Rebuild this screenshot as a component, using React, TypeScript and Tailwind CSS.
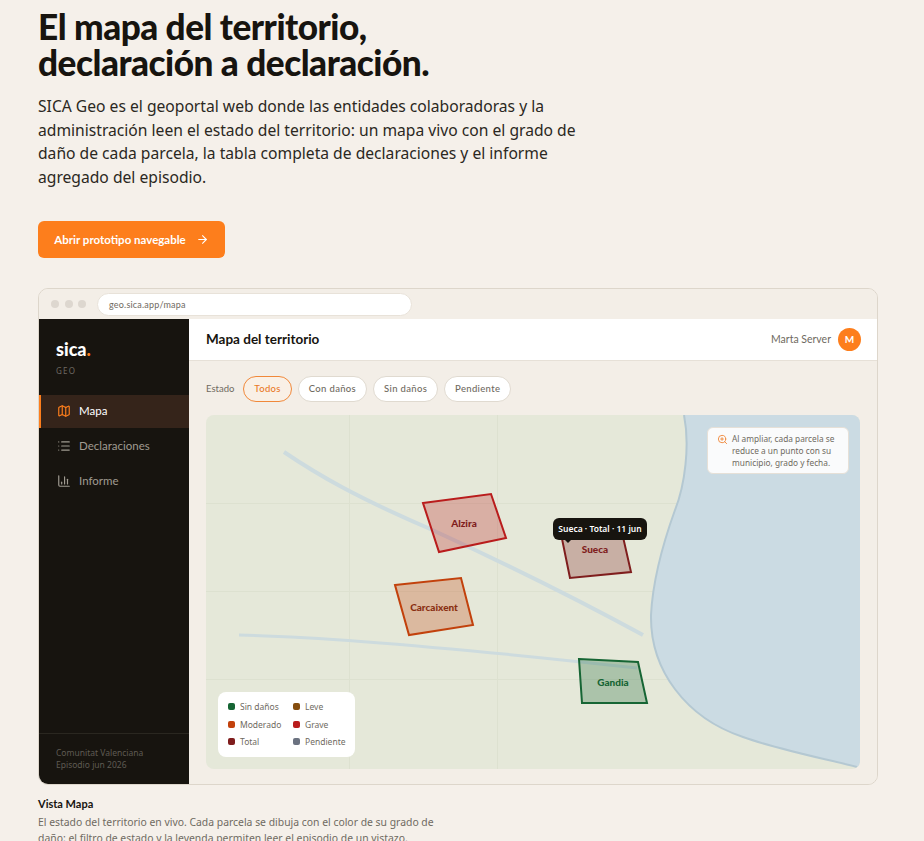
import { ArrowRight, ChartColumn, List, Map as MapIcon, ZoomIn } from "lucide-react";

const filters = ["Todos", "Con daños", "Sin daños", "Pendiente"];

const legend = [
	{ label: "Sin daños", color: "bg-[#166534]" },
	{ label: "Leve", color: "bg-[#854d0e]" },
	{ label: "Moderado", color: "bg-[#c2410c]" },
	{ label: "Grave", color: "bg-[#b91c1c]" },
	{ label: "Total", color: "bg-[#7f1d1d]" },
	{ label: "Pendiente", color: "bg-[#6b7280]" },
];

const navItems = [
	{ label: "Declaraciones", Icon: List },
	{ label: "Informe", Icon: ChartColumn },
];

function MapDrawing() {
	return (
		<svg viewBox="0 0 654 354" className="absolute inset-0 w-full h-full">
			<g stroke="#dde1d0" strokeWidth="1" fill="none">
				<path d="M143.5 0V354M291.5 0V354" />
				<path d="M0 88.5H654M0 176.5H654M0 264.5H654" />
			</g>
			<path
				d="M478 0C484 30 479 70 469 95C460 120 447 160 445 200C444 255 480 303 537 322C570 334 620 344 651 352L654 354V0Z"
				fill="#cbdbe3"
			/>
			<path
				d="M478 0C484 30 479 70 469 95C460 120 447 160 445 200C444 255 480 303 537 322C570 334 620 344 651 352"
				fill="none"
				stroke="#b4c8d2"
				strokeWidth="2"
			/>
			<path
				d="M78 37C112 60 150 82 222 113C270 135 360 178 437 220"
				fill="none"
				stroke="#cddbde"
				strokeWidth="4"
			/>
			<path
				d="M33 220C130 222 260 234 431 253"
				fill="none"
				stroke="#cddbde"
				strokeWidth="3"
			/>
			<polygon points="217,88 285,79 300,123 233,137" fill="#b91c1c" fillOpacity="0.28" stroke="#b91c1c" strokeWidth="2" />
			<polygon points="355,119 415,113 425,157 364,163" fill="#7f1d1d" fillOpacity="0.28" stroke="#7f1d1d" strokeWidth="2" />
			<polygon points="189,170 255,163 267,210 203,220" fill="#c2410c" fillOpacity="0.28" stroke="#c2410c" strokeWidth="2" />
			<polygon points="373,244 432,247 441,288 376,288" fill="#166534" fillOpacity="0.28" stroke="#166534" strokeWidth="2" />
			<g textAnchor="middle" className="font-['Lato',sans-serif] text-[10px] font-black">
				<text x="258" y="112" className="fill-[#7f1d1d]">Alzira</text>
				<text x="389" y="138" className="fill-[#7f1d1d]">Sueca</text>
				<text x="228" y="196" className="fill-[#8a2f12]">Carcaixent</text>
				<text x="407" y="271" className="fill-[#166534]">Gandia</text>
			</g>
		</svg>
	);
}

export default function App() {
	return (
		<div className="h-screen overflow-hidden bg-[#f5f0ea] pl-[38px] pr-[46px] pt-[8px] font-['Noto_Sans',sans-serif]">
			<h1 className="font-['Lato',sans-serif] text-[35.2px] leading-[36px] font-black tracking-[-0.5px] text-[#17140f]">
				El mapa del territorio,
				<br />
				declaración a declaración.
			</h1>
			<p className="mt-[15px] w-[545px] text-[15.65px] leading-[23.6px] text-[#2b2822]">
				SICA Geo es el geoportal web donde las entidades colaboradoras y la administración leen el estado del territorio: un mapa vivo con el grado de daño de cada parcela, la tabla completa de declaraciones y el informe agregado del episodio.
			</p>
			<button className="mt-[32px] flex h-[37px] w-[187px] items-center justify-center gap-[10px] rounded-[6px] bg-[#fd7e1c] font-['Lato',sans-serif] text-[11.5px] font-bold text-white">
				Abrir prototipo navegable
				<ArrowRight size={13} />
			</button>

			<div className="mt-[30px] flex h-[497px] flex-col overflow-hidden rounded-[10px] border border-[#ddd6cb]">
				<div className="flex h-[30px] shrink-0 items-center bg-[#f3eee7] pl-[12px]">
					<span className="h-[8px] w-[8px] rounded-full bg-[#ddd7cf]" />
					<span className="ml-[6px] h-[8px] w-[8px] rounded-full bg-[#ddd7cf]" />
					<span className="ml-[5px] h-[8px] w-[8px] rounded-full bg-[#ddd7cf]" />
					<div className="ml-[11px] flex h-[23px] w-[315px] items-center rounded-full border border-[#e8e2d9] bg-white pl-[11px] font-['Lato',sans-serif] text-[9px] tracking-[0.2px] text-[#6f6a61]">
						geo.sica.app/mapa
					</div>
				</div>

				<div className="flex min-h-0 flex-1">
					<aside className="flex w-[150px] shrink-0 flex-col bg-[#17140f]">
						<div className="pl-[17px] pt-[19px]">
							<div className="font-['Lato',sans-serif] text-[18px] leading-[22px] font-black text-white">
								sica<span className="text-[#fd7e1c]">.</span>
							</div>
							<div className="mt-[5px] text-[8px] leading-[12px] tracking-[1.2px] text-[#6e6a62]">GEO</div>
						</div>
						<nav className="mt-[18px] flex flex-col gap-[2px]">
							<div className="flex h-[33px] items-center gap-[8px] border-l-2 border-[#fd7e1c] bg-[#35241a] pb-[2px] pl-[16px] font-['Lato',sans-serif] text-[11.5px] text-white">
								<MapIcon size={14} className="text-[#fd7e1c]" />
								Mapa
							</div>
							{navItems.map(({ label, Icon }) => (
								<div key={label} className="flex h-[33px] items-center gap-[8px] pb-[2px] pl-[18px] font-['Lato',sans-serif] text-[11.5px] text-[#a09b91]">
									<Icon size={14} />
									{label}
								</div>
							))}
						</nav>
						<div className="mt-auto h-[51px] border-t border-[#2a2720] pl-[17px] pt-[13px] text-[8.5px] leading-[12px] text-[#5f5b53]">
							Comunitat Valenciana
							<br />
							Episodio jun 2026
						</div>
					</aside>

					<main className="flex min-w-0 flex-1 flex-col bg-[#f3eee7]">
						<header className="flex h-[42px] shrink-0 items-center justify-between border-b border-[#e6e0d7] bg-white pl-[17px] pr-[16px]">
							<h2 className="pb-[2px] font-['Lato',sans-serif] text-[13.5px] font-bold text-[#17140f]">Mapa del territorio</h2>
							<div className="flex items-center gap-[7px]">
								<span className="font-['Lato',sans-serif] text-[10.5px] text-[#6f6a61]">Marta Server</span>
								<span className="flex h-[23px] w-[23px] items-center justify-center rounded-full bg-[#fd7e1c] font-['Lato',sans-serif] text-[10px] font-bold text-white">M</span>
							</div>
						</header>

						<div className="flex items-center pl-[17px] pt-[15px]">
							<span className="mr-[9px] font-['Lato',sans-serif] text-[9.5px] text-[#6f6a61]">Estado</span>
							<div className="flex gap-[6px]">
								{filters.map((filter) => (
									<span
										key={filter}
										className={
											filter === "Todos"
												? "flex h-[26px] items-center rounded-full border border-[#f0883a] bg-[#f9f0e6] px-[10px] font-['Lato',sans-serif] text-[9.5px] font-medium tracking-[0.33px] text-[#ea7a28]"
												: "flex h-[26px] items-center rounded-full border border-[#e0dad0] bg-white px-[10px] font-['Lato',sans-serif] text-[9.5px] font-medium tracking-[0.33px] text-[#6f6a61]"
										}
									>
										{filter}
									</span>
								))}
							</div>
						</div>

						<div className="relative mx-[17px] mt-[13px] h-[354px] overflow-hidden rounded-[8px] bg-[#e5e8d9]">
							<MapDrawing />

							<div className="absolute left-[501px] top-[12px] flex h-[47px] w-[142px] gap-[4px] rounded-[6px] border border-[#e6e0d7] bg-white/90 pl-[9px] pt-[5px] text-[8.3px] leading-[11.6px] text-[#6f6a61]">
								<ZoomIn size={11} className="mt-[1px] shrink-0 text-[#f0883a]" />
								<span>
									Al ampliar, cada parcela se reduce a un punto con su municipio, grado y fecha.
								</span>
							</div>

							<div className="absolute left-[347px] top-[103px] flex h-[22px] w-[94px] items-center justify-center rounded-[6px] bg-[#17140f] font-['Noto_Sans',sans-serif] text-[8.5px] font-semibold text-white">
								Sueca · Total · 11 jun
							</div>
							<span className="absolute left-[359px] top-[125px] h-0 w-0 border-x-[3px] border-t-[3px] border-x-transparent border-t-[#17140f]" />

							<div className="absolute bottom-[12px] left-[12px] grid h-[65px] w-[137px] grid-cols-[65px_1fr] content-center gap-y-[6px] rounded-[8px] bg-white pb-[1px] pl-[10px] text-[8.5px] leading-[11.5px] text-[#6f6a61]">
								{legend.map((item) => (
									<div key={item.label} className="flex items-center gap-[5px]">
										<span className={`h-[7px] w-[7px] rounded-[2px] ${item.color}`} />
										{item.label}
									</div>
								))}
							</div>
						</div>
					</main>
				</div>
			</div>

			<div className="mt-[12px] w-[420px]">
				<div className="font-['Lato',sans-serif] text-[11px] leading-[14px] font-bold text-[#17140f]">Vista Mapa</div>
				<p className="mt-[4px] text-[10.4px] leading-[15.5px] text-[#6f6a61]">
					El estado del territorio en vivo. Cada parcela se dibuja con el color de su grado de daño: el filtro de estado y la leyenda permiten leer el episodio de un vistazo.
				</p>
			</div>
		</div>
	);
}
